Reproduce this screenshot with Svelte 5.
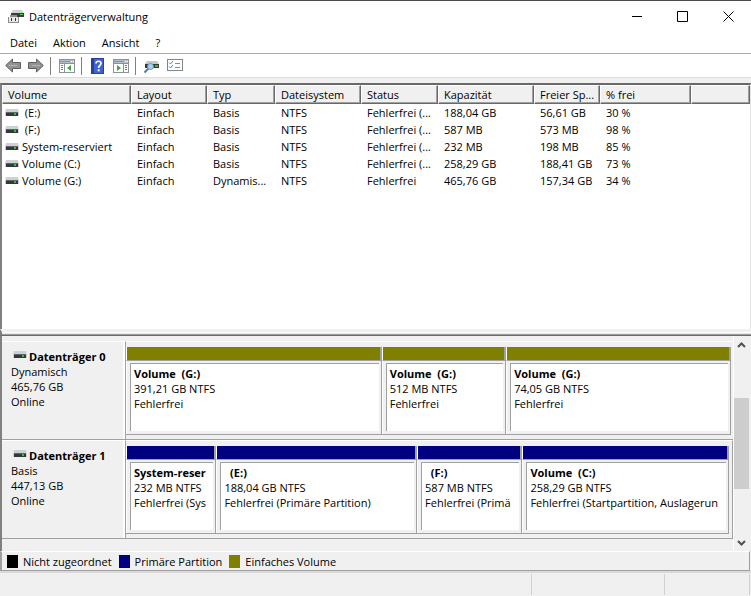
<script>
  const columns = [
    { title: 'Volume', width: 129 },
    { title: 'Layout', width: 76 },
    { title: 'Typ', width: 68 },
    { title: 'Dateisystem', width: 86 },
    { title: 'Status', width: 77 },
    { title: 'Kapazität', width: 96 },
    { title: 'Freier Sp...', width: 66 },
    { title: '% frei', width: 91 },
  ];

  const volumes = [
    ['\u00a0(E:)', 'Einfach', 'Basis', 'NTFS', 'Fehlerfrei (...', '188,04 GB', '56,61 GB', '30 %'],
    ['\u00a0(F:)', 'Einfach', 'Basis', 'NTFS', 'Fehlerfrei (...', '587 MB', '573 MB', '98 %'],
    ['System-reserviert', 'Einfach', 'Basis', 'NTFS', 'Fehlerfrei (...', '232 MB', '198 MB', '85 %'],
    ['Volume (C:)', 'Einfach', 'Basis', 'NTFS', 'Fehlerfrei (...', '258,29 GB', '188,41 GB', '73 %'],
    ['Volume (G:)', 'Einfach', 'Dynamis...', 'NTFS', 'Fehlerfrei', '465,76 GB', '157,34 GB', '34 %'],
  ];

  // share = relative width of the partition in the graphical view
  const disks = [
    {
      name: 'Datenträger 0',
      type: 'Dynamisch',
      size: '465,76 GB',
      kind: 'simple',
      parts: [
        { name: 'Volume\u00a0 (G:)', size: '391,21 GB NTFS', status: 'Fehlerfrei', share: 256 },
        { name: 'Volume\u00a0 (G:)', size: '512 MB NTFS', status: 'Fehlerfrei', share: 124 },
        { name: 'Volume\u00a0 (G:)', size: '74,05 GB NTFS', status: 'Fehlerfrei', share: 225 },
      ],
    },
    {
      name: 'Datenträger 1',
      type: 'Basis',
      size: '447,13 GB',
      kind: 'primary',
      parts: [
        { name: 'System-reser', size: '232 MB NTFS', status: 'Fehlerfrei (Sys', share: 90 },
        { name: '\u00a0 (E:)', size: '188,04 GB NTFS', status: 'Fehlerfrei (Primäre Partition)', share: 201 },
        { name: '\u00a0 (F:)', size: '587 MB NTFS', status: 'Fehlerfrei (Primä', share: 105 },
        { name: 'Volume\u00a0 (C:)', size: '258,29 GB NTFS', status: 'Fehlerfrei (Startpartition, Auslagerun', share: 207 },
      ],
    },
  ];

  const legend = [
    { kind: 'unallocated', label: 'Nicht zugeordnet' },
    { kind: 'primary', label: 'Primäre Partition' },
    { kind: 'simple', label: 'Einfaches Volume' },
  ];

  let selected = $state(-1);
</script>

{#snippet drive()}
  <svg class="drive" width="14" height="8" viewBox="0 0 14 8" aria-hidden="true">
    <path d="M1 0H13L14 4V7H0V4Z" fill="#cdd0d4" />
    <rect x="1" y="3" width="12" height="4" fill="#34373b" />
    <rect x="1" y="3" width="12" height="1" fill="#62666b" />
    <rect x="9" y="4" width="2" height="2" fill="#2fc52f" />
  </svg>
{/snippet}

{#snippet arrow(d)}
  <svg width="16" height="16" viewBox="0 0 16 16" aria-hidden="true">
    <path {d} fill="#929292" stroke="#5e5e5e" />
    <path d="M4 7.5H12" stroke="#b4b4b4" />
  </svg>
{/snippet}

{#snippet pane(flip)}
  <svg width="16" height="14" viewBox="0 0 16 14" aria-hidden="true">
    <rect x="0.5" y="0.5" width="15" height="13" fill="#fff" stroke="#8a939c" />
    <rect x="1" y="1" width="14" height="3" fill="#b5bfc9" />
    <path d="M1 2.5H11M1 4.5H15" stroke="#8a939c" />
    <path d="M12 2.5H13M14 2.5H15" stroke="#fff" />
    {#if flip}
      <path d="M10.5 5V13" stroke="#8a939c" />
      <path d="M12 6.5H14M12 8.5H14M12 10.5H14" stroke="#4d7fae" />
      <path d="M4 6L8 9L4 12Z" fill="#3aa935" />
    {:else}
      <path d="M5.5 5V13" stroke="#8a939c" />
      <path d="M2 6.5H4M2 8.5H4M2 10.5H4" stroke="#4d7fae" />
      <path d="M12 6L8 9L12 12Z" fill="#3aa935" />
    {/if}
  </svg>
{/snippet}

<div class="window">
  <header class="titlebar">
    <svg width="16" height="16" viewBox="0 0 16 16" aria-hidden="true">
      <path d="M5 1H14L16 4H3Z" fill="#d0d3d5" />
      <rect x="3" y="4" width="13" height="4" fill="#3a3d40" />
      <rect x="12" y="5" width="3" height="1" fill="#3fe03f" />
      <path d="M2 6H9V8H11V14H0V8H2Z" fill="#8b8d8f" />
      <rect x="1" y="8" width="9" height="5" fill="#e9e9e9" />
      <path d="M3 9H4V12H3ZM7 9H8V12H7Z" fill="#333" />
    </svg>
    <h1>Datenträgerverwaltung</h1>
    <div class="controls">
      <button aria-label="Minimieren">
        <svg width="12" height="12" viewBox="0 0 12 12"><path d="M2 5.5H12" stroke="#000" /></svg>
      </button>
      <button aria-label="Maximieren">
        <svg width="12" height="12" viewBox="0 0 12 12"><path d="M1.5 0.5H11.5V10.5H1.5Z" fill="none" stroke="#000" /></svg>
      </button>
      <button aria-label="Schließen">
        <svg width="12" height="12" viewBox="0 0 12 12"><path d="M1.5 0.5L11.5 10.5M11.5 0.5L1.5 10.5" stroke="#000" /></svg>
      </button>
    </div>
  </header>

  <nav class="menu">
    <button>Datei</button>
    <button>Aktion</button>
    <button>Ansicht</button>
    <button>?</button>
  </nav>

  <div class="toolbar">
    <button aria-label="Zurück">{@render arrow('M0.7 7.5L7.5 1V4.5H15.5V10.5H7.5V14Z')}</button>
    <button aria-label="Vorwärts">{@render arrow('M15.3 7.5L8.5 1V4.5H0.5V10.5H8.5V14Z')}</button>
    <span class="divider"></span>
    <button aria-label="Konsolenstruktur">{@render pane(false)}</button>
    <span class="divider"></span>
    <button aria-label="Hilfe">
      <svg width="16" height="16" viewBox="-1 0 16 16">
        <rect x="0.5" y="0.5" width="12" height="15" fill="#3f63cf" stroke="#2b4199" />
        <path d="M1 1H3V15H1Z" fill="#2b4199" />
        <path d="M5 5.5C5 2.5 10 2.5 10 5.5C10 7.5 7.6 7.5 7.6 10" fill="none" stroke="#fff" stroke-width="1.7" />
        <rect x="6.7" y="11.3" width="2" height="2" fill="#fff" />
      </svg>
    </button>
    <button aria-label="Aktionsbereich">{@render pane(true)}</button>
    <span class="divider"></span>
    <button aria-label="Datenträger neu einlesen">
      <svg width="16" height="16" viewBox="0 0 16 16">
        <path d="M3 3H13L15 6H1Z" fill="#c3c7ca" />
        <rect x="1" y="6" width="14" height="4" fill="#34373b" />
        <rect x="11" y="7" width="3" height="2" fill="#2fc52f" />
        <path d="M0.5 14.5L4.5 10.5" stroke="#4f7fa8" stroke-width="2" />
        <circle cx="6.5" cy="8.5" r="3" fill="#a9d2ee" stroke="#6c93b3" />
      </svg>
    </button>
    <button aria-label="Einstellungen">
      <svg width="16" height="13" viewBox="0 0 16 13">
        <rect x="0.5" y="0.5" width="15" height="11" fill="#fff" stroke="#7d8791" />
        <path d="M2 3.5L3.5 5L6 2M2 7.5L3.5 9L6 6" fill="none" stroke="#2f8fd8" />
        <path d="M8 4.5H13M8 8.5H13" stroke="#8c8c8c" />
      </svg>
    </button>
  </div>

  <main>
    <div class="list">
      <table>
        <colgroup>
          {#each columns as column}
            <col style="width: {column.width}px" />
          {/each}
          <col />
        </colgroup>
        <thead>
          <tr>
            {#each columns as column}
              <th>{column.title}</th>
            {/each}
            <th></th>
          </tr>
        </thead>
        <tbody>
          {#each volumes as volume, i}
            <tr class:selected={selected === i} onclick={() => (selected = i)}>
              {#each volume as value, j}
                <td>
                  {#if j === 0}
                    <span class="name">{@render drive()}{value}</span>
                  {:else}
                    {value}
                  {/if}
                </td>
              {/each}
              <td></td>
            </tr>
          {/each}
        </tbody>
      </table>
    </div>
    <div class="splitter"></div>

    <div class="graph">
      <div class="disks">
        {#each disks as disk}
          <section class="disk">
            <div class="info">
              <h2>{@render drive()}{disk.name}</h2>
              <p>{disk.type}</p>
              <p>{disk.size}</p>
              <p>Online</p>
            </div>
            <div class="parts {disk.kind}">
              {#each disk.parts as part}
                <div class="part" style="flex-grow: {part.share}">
                  <div class="bar"></div>
                  <div class="frame">
                    <div class="box">
                      <h3>{part.name}</h3>
                      <p>{part.size}</p>
                      <p>{part.status}</p>
                    </div>
                  </div>
                </div>
              {/each}
            </div>
          </section>
        {/each}
      </div>
      <div class="scrollbar">
        <button aria-label="Nach oben">
          <svg width="9" height="6" viewBox="0 0 9 6"><path d="M1 5L4.5 1.5L8 5" fill="none" stroke="#505050" stroke-width="2" /></svg>
        </button>
        <div class="track"><div class="thumb"></div></div>
        <button aria-label="Nach unten">
          <svg width="9" height="6" viewBox="0 0 9 6"><path d="M1 1L4.5 4.5L8 1" fill="none" stroke="#505050" stroke-width="2" /></svg>
        </button>
      </div>
    </div>

    <ul class="legend">
      {#each legend as item}
        <li><span class="swatch {item.kind}"></span>{item.label}</li>
      {/each}
    </ul>
  </main>

  <footer>
    <span></span>
    <span></span>
    <span></span>
  </footer>
</div>

<style>
  :global(body) {
    margin: 0;
  }

  .window {
    display: flex;
    flex-direction: column;
    box-sizing: border-box;
    min-height: 100vh;
    border-top: 1px solid #4a4a4a;
    background: #fff;
    color: #000;
    font: 11px/15px 'Segoe UI', 'Open Sans', 'Noto Sans', sans-serif;
  }

  h1, h2, h3, p, ul {
    margin: 0;
    padding: 0;
    font-size: 11px;
  }

  h1 {
    font-weight: 400;
  }

  svg {
    display: block;
    flex: none;
  }

  button {
    display: flex;
    align-items: center;
    justify-content: center;
    padding: 0;
    border: 0;
    background: none;
    color: inherit;
    font: inherit;
  }

  .titlebar {
    display: flex;
    align-items: center;
    gap: 5px;
    height: 31px;
    padding-left: 8px;
  }

  .controls {
    display: flex;
    align-self: stretch;
    margin-left: auto;
  }

  .controls button {
    width: 46px;
  }

  .menu {
    display: flex;
    gap: 16px;
    height: 21px;
    padding-left: 10px;
    border-bottom: 1px solid #a9abb2;
  }

  .toolbar {
    display: flex;
    align-items: center;
    gap: 7px;
    height: 23px;
    padding-left: 5px;
    border-bottom: 1px solid #dcdcdc;
  }

  .divider {
    width: 1px;
    height: 18px;
    margin: 0 1px 0 -1px;
    background: #808080;
  }

  main {
    display: flex;
    flex: 1;
    flex-direction: column;
    border-top: 5px solid #f0f0f0;
    background: #f0f0f0;
  }

  .list {
    flex: 1;
    border: solid #696969;
    border-width: 2px 1px 0 2px;
    border-left-color: #808080;
    border-right-color: #e3e3e3;
    background: #fff;
  }

  table {
    width: 100%;
    border-collapse: separate;
    border-spacing: 0;
    table-layout: fixed;
  }

  th, td {
    overflow: hidden;
    padding: 0 0 0 6px;
    text-align: left;
    white-space: nowrap;
  }

  th {
    height: 17px;
    padding-left: 5px;
    border: 1px solid #696969;
    border-top-color: #fff;
    border-left-color: #fff;
    background: #f0f0f0;
    box-shadow: inset -1px -1px #a0a0a0;
    font-weight: 400;
  }

  td {
    height: 17px;
  }

  tr.selected td {
    background: #cce8ff;
  }

  .name {
    display: flex;
    align-items: center;
    gap: 3px;
    margin-left: -3px;
  }

  .splitter {
    height: 3px;
    border-top: 3px solid #f0f0f0;
    border-bottom: 1px solid #696969;
    border-left: 2px solid #808080;
    background: linear-gradient(#fff 1px, #e3e3e3 1px 2px, #a0a0a0 2px);
  }

  .graph {
    display: flex;
    border-left: 2px solid #808080;
  }

  .disks {
    flex: 1;
    min-width: 0;
    padding: 5px 0 12px;
  }

  .disk {
    display: flex;
    height: 98px;
    border-bottom: 1px solid #a0a0a0;
  }

  .info {
    flex: none;
    width: 114px;
    padding: 7px 0 0 9px;
    border-top: 1px solid #fff;
    border-right: 1px solid #a0a0a0;
    box-shadow: inset -2px 0 #fff;
  }

  .info .drive, h2 :global(svg) {
    margin: -3px 2px 0 2px;
  }

  h2 {
    display: flex;
    align-items: center;
    white-space: nowrap;
  }

  .parts {
    display: flex;
    flex: 1;
    min-width: 0;
    padding: 5px 2px 0 0;
    border-top: 1px solid #fff;
  }

  .parts.primary {
    padding-right: 3px;
    border-right: 1px solid #a0a0a0;
  }

  .part {
    display: flex;
    flex-direction: column;
    flex-basis: 0;
    min-width: 0;
    height: 88px;
    box-sizing: border-box;
    border-right: 1px solid #a0a0a0;
    border-bottom: 1px solid #a0a0a0;
  }

  .bar {
    height: 13px;
    border: solid #fff;
    border-width: 0 1px;
    border-right-color: #a0a0a0;
  }

  .simple .bar, .swatch.simple {
    background: #808000;
  }

  .primary .bar, .swatch.primary {
    background: #000080;
  }

  .swatch.unallocated {
    background: #000;
  }

  .frame {
    display: flex;
    flex: 1;
    padding: 2px 2px 3px 3px;
    border-top: 1px solid #a0a0a0;
    border-left: 1px solid #fff;
  }

  .box {
    flex: 1;
    min-width: 0;
    overflow: hidden;
    padding: 2px 4px 0 3px;
    border-top: 1px solid #a0a0a0;
    border-left: 1px solid #a0a0a0;
    background: #fff;
    white-space: nowrap;
  }

  .scrollbar {
    display: flex;
    flex-direction: column;
    width: 15px;
    margin-right: 2px;
    border-left: 1px solid #fff;
  }

  .scrollbar button {
    height: 17px;
  }

  .track {
    flex: 1;
    padding-top: 45px;
  }

  .thumb {
    height: 91px;
    background: #cdcdcd;
  }

  .legend {
    display: flex;
    align-items: center;
    gap: 7px;
    height: 18px;
    margin-right: 1px;
    padding-left: 5px;
    border: solid #a0a0a0;
    border-width: 1px 1px 1px 2px;
    border-top-color: #fff;
    list-style: none;
  }

  .legend li {
    display: flex;
    align-items: center;
    gap: 5px;
  }

  .swatch {
    width: 11px;
    height: 13px;
  }

  footer {
    display: flex;
    height: 21px;
    padding: 1px 1px 1px 0;
    border-top: 2px solid #d9d9d9;
    background: #f0f0f0;
  }

  footer span {
    border-right: 1px solid #d0d0d0;
  }

  footer span:first-child {
    flex: 1;
  }

  footer span:nth-child(2) {
    width: 132px;
  }

  footer span:last-child {
    width: 84px;
  }
</style>
